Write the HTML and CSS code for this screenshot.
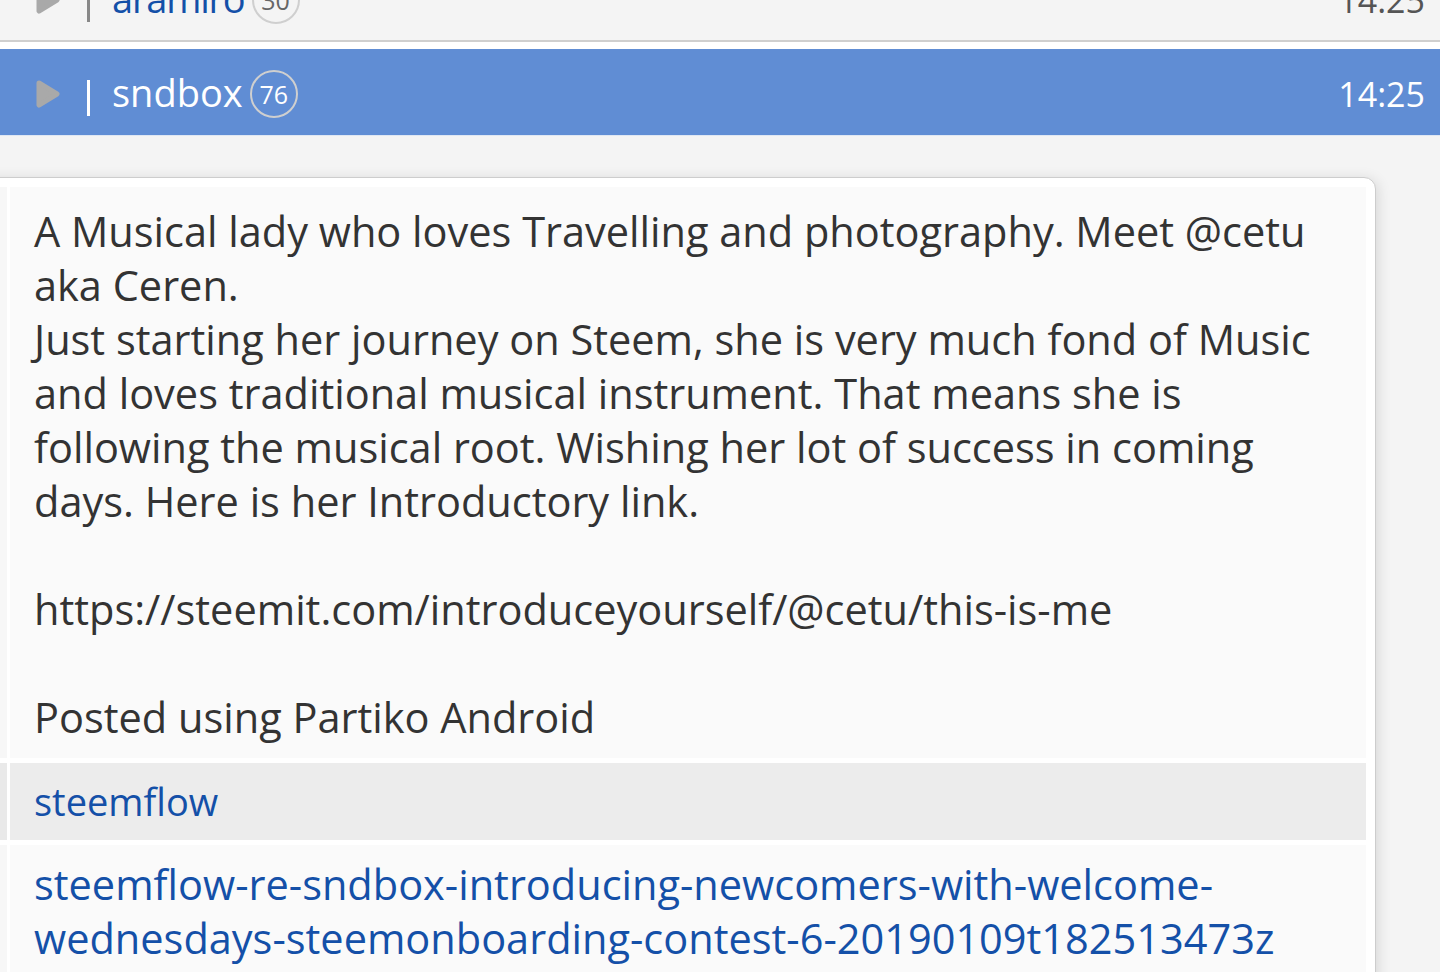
FILE: index.html
```html
<!DOCTYPE html>
<html lang="en">
<head>
<meta charset="utf-8">
<title>sndbox</title>
<link rel="stylesheet" href="styles.css">
</head>
<body>
<div class="list">
  <div class="item item-prev">
    <svg class="play" viewBox="0 0 24 28" width="24" height="28"><path d="M3 3 L21 14 L3 25 Z" fill="#a9a9a9" stroke="#a9a9a9" stroke-width="5" stroke-linejoin="round"/></svg>
    <span class="sep"></span>
    <span class="name name-prev">aramiro</span>
    <span class="badge">30</span>
    <span class="time">14:25</span>
  </div>
  <div class="item item-active">
    <svg class="play" viewBox="0 0 24 28" width="24" height="28"><path d="M3 3 L21 14 L3 25 Z" fill="#a9a9a9" stroke="#a9a9a9" stroke-width="5" stroke-linejoin="round"/></svg>
    <span class="sep"></span>
    <span class="name">sndbox</span>
    <span class="badge">76</span>
    <span class="time">14:25</span>
  </div>
</div>

<div class="card">
  <div class="grid">
    <div class="side"></div>
    <div class="cell body-text">A Musical lady who loves Travelling and photography. Meet @cetu aka Ceren.<br>Just starting her journey on Steem, she is very much fond of Music and loves traditional musical instrument. That means she is following the musical root. Wishing her lot of success in coming days. Here is her Introductory link.<br><br>https://steemit.com/introduceyourself/@cetu/this-is-me<br><br>Posted using Partiko Android</div>
    <div class="side side-gray"></div>
    <div class="cell cell-gray"><a class="link" href="#">steemflow</a></div>
    <div class="side"></div>
    <div class="cell cell-link"><a class="link" href="#">steemflow-re-sndbox-introducing-newcomers-with-welcome-wednesdays-steemonboarding-contest-6-20190109t182513473z</a></div>
  </div>
</div>
</body>
</html>
```

FILE: styles.css
```css
html, body {
  margin: 0;
  padding: 0;
}
body {
  background: #f4f4f4;
  font-family: "Open Sans", "Noto Sans", sans-serif;
  color: #333;
  overflow: hidden;
  height: 972px;
}
.list {
  margin-top: -44px;
}
.item {
  display: flex;
  align-items: center;
  height: 84px;
  padding: 0 15px 0 36px;
  border-bottom: 2px solid #cfcfcf;
}
.item-active {
  border-top: 7px solid #fff;
  border-bottom: 1px solid #dfe7f3;
  background: #608dd4;
  height: 86px;
}
.play {
  flex: none;
  display: block;
  margin-top: 4px;
}
.sep {
  width: 3px;
  height: 36px;
  background: #888;
  margin: 12px 22px 0 27px;
}
.item-active .sep {
  background: #fff;
}
.name {
  font-size: 38px;
  color: #1450a8;
  line-height: 1;
  margin-top: 0;
}
.name-prev {
  letter-spacing: -1.2px;
}
.item-active .name {
  color: #fff;
}
.badge {
  width: 44px;
  height: 44px;
  margin: 4px 0 0 7px;
  border: 2px solid #cfcfcf;
  border-radius: 50%;
  display: flex;
  align-items: center;
  justify-content: center;
  font-size: 25px;
  color: #666;
  line-height: 1;
}
.item-active .badge {
  color: #fff;
}
.time {
  margin-left: auto;
  margin-top: 4px;
  font-size: 34px;
  color: #555;
  line-height: 1;
}
.item-active .time {
  color: #fff;
}
.card {
  margin: 41px 0 0 -30px;
  width: 1406px;
  box-sizing: border-box;
  background: #fff;
  border: 1px solid #cdcdcd;
  border-radius: 12px;
  padding: 9px 9px 0 6px;
  box-shadow: 2px 2px 14px rgba(0, 0, 0, 0.12);
}
.grid {
  display: grid;
  grid-template-columns: 30px 1fr;
  column-gap: 3px;
  row-gap: 5px;
}
.side {
  background: #f7f7f7;
}
.side-gray {
  background: #e9e9e9;
}
.cell {
  background: #fafafa;
  font-size: 41.5px;
  line-height: 54px;
  padding: 17px 24px 14px;
}
.cell-gray {
  background: #ececec;
  font-size: 38px;
  padding: 11px 24px 12px;
}
.cell-link {
  padding: 12px 24px 40px;
}
.link {
  color: #1450a8;
  text-decoration: none;
}
```
